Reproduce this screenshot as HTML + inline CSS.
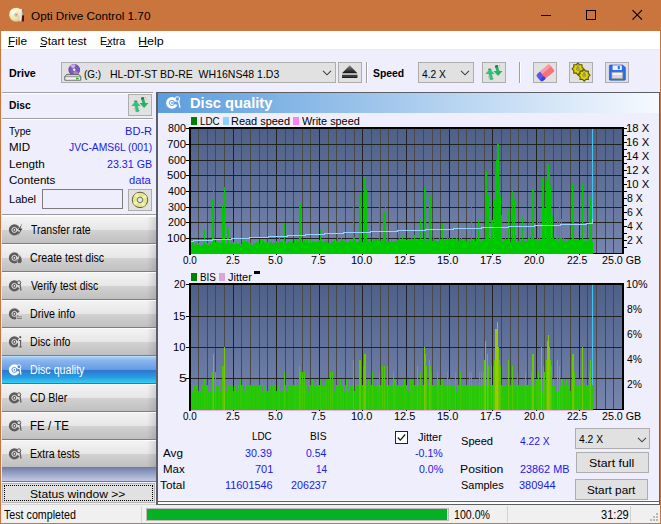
<!DOCTYPE html><html><head><meta charset="utf-8"><title>Opti Drive Control 1.70</title><style>
html,body{margin:0;padding:0;background:#eeeefc;overflow:hidden}
#w{position:relative;width:661px;height:524px;background:#eeeefc;overflow:hidden;font-family:"Liberation Sans", sans-serif}
#w div,#w span,#w svg{position:absolute}
#w span{white-space:pre;line-height:1;transform-origin:0 0;color:#000}
.btn{background:#e1e1e1;border:1px solid #adadad;box-sizing:border-box}
.nav{left:2px;width:154px;height:28px;box-sizing:border-box;border-top:1px solid #fafafa;border-bottom:1px solid #7d7d7d;background:linear-gradient(90deg,rgba(0,0,0,0) 0,rgba(0,0,0,0) 94%,rgba(0,0,0,.12) 100%),linear-gradient(180deg,#f3f3f3 0,#e7e7e7 48%,#d1d1d1 52%,#c0c0c0 100%)}
.navsel{border-top:1px solid #b8dcfa;border-bottom:1px solid #2a7bc0;background:linear-gradient(180deg,#a6cef4 0,#86b4ee 15%,#6a9ae4 48%,#2c78d0 52%,#2a9ce0 78%,#30d0f4 100%)}
</style></head><body><div id="w">
<div style="left:0px;top:0px;width:661px;height:31px;background:#ca753d"></div>
<div style="left:0px;top:31px;width:661px;height:18px;background:#fff"></div>
<div style="left:1px;top:49px;width:659px;height:1px;background:#ebebee"></div>
<div style="left:0px;top:0px;width:1px;height:524px;background:#ca753d"></div>
<div style="left:660px;top:0px;width:1px;height:524px;background:#ca753d"></div>
<div style="left:0px;top:523px;width:661px;height:1px;background:#ca753d"></div>
<svg style="left:8px;top:6px" width="18" height="18" viewBox="0 0 18 18"><defs><radialGradient id="cd" cx=".35" cy=".3" r=".8"><stop offset="0" stop-color="#fffbe0"/><stop offset=".6" stop-color="#efe6b0"/><stop offset="1" stop-color="#c8bc80"/></radialGradient></defs><circle cx="8.2" cy="8.7" r="7" fill="url(#cd)"/><path d="M8.2 8.7L1.6 6.2A7 7 0 0 1 4.5 2.8Z" fill="#fff" opacity=".6"/><path d="M8.2 8.7L14.8 11.2A7 7 0 0 1 11.9 14.6Z" fill="#d8cc90" opacity=".7"/><circle cx="8.2" cy="8.7" r="1.9" fill="#d8d8d8" stroke="#bdbdbd" stroke-width=".5"/><circle cx="8.2" cy="8.7" r=".8" fill="#c9723c"/><path d="M12.2 3.2V15.2" stroke="#e8e8e8" stroke-width="1.5"/><path d="M11 3.4L12.2 5L13.6 3.2" stroke="#f4f4f4" stroke-width="1.2" fill="none"/><path d="M15 3V9.5" stroke="#777" stroke-width=".9"/><rect x="14" y="9.3" width="2" height="6.2" rx=".6" fill="#5a0c0c"/></svg>
<svg style="left:530px;top:0" width="131" height="31" viewBox="0 0 131 31"><g stroke="#000" stroke-width="1" fill="none"><path d="M11 15.5H21"/><rect x="56.5" y="10.5" width="9" height="9"/><path d="M102.5 10.2L112 19.7M112 10.2L102.5 19.7" stroke-width="1.15"/></g></svg>
<div style="left:8px;top:46.3px;width:6px;height:1px;background:#000"></div>
<div style="left:40px;top:46.3px;width:6px;height:1px;background:#000"></div>
<div style="left:105.5px;top:46.3px;width:5.5px;height:1px;background:#000"></div>
<div style="left:139px;top:46.3px;width:8.5px;height:1px;background:#000"></div>
<div class="btn" style="left:61px;top:62px;width:275px;height:21px"></div>
<svg style="left:322px;top:70.3px" width="10" height="6" viewBox="0 0 10 6"><path d="M1 .8L5 4.8L9 .8" stroke="#404040" stroke-width="1.1" fill="none"/></svg>
<div class="btn" style="left:338px;top:62px;width:24px;height:21px"></div>
<svg style="left:341px;top:64px" width="18" height="16" viewBox="0 0 18 16"><defs><linearGradient id="ej" x1="0" y1="0" x2="0" y2="1"><stop offset="0" stop-color="#8a8a8a"/><stop offset="1" stop-color="#111"/></linearGradient></defs><path d="M8.7 1.2L16.4 9.2H1Z" fill="url(#ej)"/><rect x="1" y="10.8" width="15.4" height="3.2" fill="#1a1a1a"/><rect x="1" y="11.6" width="15.4" height=".9" fill="#666"/></svg>
<div style="left:366px;top:62px;width:1px;height:21px;background:#a0a0a0"></div>
<div style="left:367px;top:62px;width:1px;height:21px;background:#fff"></div>
<div class="btn" style="left:418px;top:62px;width:56px;height:21px"></div>
<svg style="left:460px;top:70.3px" width="10" height="6" viewBox="0 0 10 6"><path d="M1 .8L5 4.8L9 .8" stroke="#404040" stroke-width="1.1" fill="none"/></svg>
<div class="btn" style="left:482px;top:62px;width:24px;height:21px"></div>
<div class="btn" style="left:533px;top:62px;width:24px;height:21px"></div>
<div class="btn" style="left:569px;top:62px;width:24px;height:21px"></div>
<div class="btn" style="left:605px;top:62px;width:24px;height:21px"></div>
<div style="left:519px;top:62px;width:1px;height:21px;background:#a0a0a0"></div>
<div style="left:520px;top:62px;width:1px;height:21px;background:#fff"></div>
<svg style="left:482px;top:62px" width="24" height="22" viewBox="0 0 24 22"><defs><linearGradient id="ar482" x1="0" y1="0" x2="1" y2="1"><stop offset="0" stop-color="#28b868"/><stop offset="1" stop-color="#3cd884"/></linearGradient></defs><path d="M7.9 6.8L3.3 11.9H6.6L8.4 18.2L11.2 17.4L9.9 11.9H12.6Z" fill="#2fc474"/><path d="M12.8 3.9L15.6 3L17.4 9H20.5L16.1 13.9L11.5 9H14.4Z" fill="#27b267"/><path d="M13 3.8L15.4 3.1L16 5L13.6 5.8Z" fill="#157a40"/><path d="M6 7.2H9.4" stroke="#444" stroke-width=".8"/><path d="M17.2 3.2l.8 2.2M6.5 14.5l1 3M11.4 16.2l-.6.8" stroke="#666" stroke-width=".6" stroke-dasharray="1 1"/></svg>
<svg style="left:535px;top:63px" width="21" height="20" viewBox="0 0 21 20"><g transform="rotate(-40 10.5 10)"><rect x="1.6" y="5.4" width="7" height="9" rx="2.2" fill="#5458f0"/><rect x="7" y="5.4" width="12" height="9" rx="1.6" fill="#f4727c"/><rect x="7.4" y="5.4" width="11.2" height="3.2" rx="1.2" fill="#fb9aa0"/><rect x="2.4" y="11.4" width="5" height="3" rx="1.2" fill="#3a3ee0"/></g></svg>
<svg style="left:569px;top:62px" width="24" height="21" viewBox="0 0 24 21"><path d="M14.8 6.9L13.0 8.6L13.1 11.1L10.6 11.0L8.9 12.8L7.2 11.0L4.7 11.1L4.8 8.6L3.0 6.9L4.8 5.2L4.7 2.7L7.2 2.8L8.9 1.0L10.6 2.8L13.1 2.7L13.0 5.2Z" fill="#dcd400" stroke="#5e5800" stroke-width="1.1" stroke-linejoin="round"/><circle cx="8.9" cy="6.9" r="1.6" fill="#c8c4a0" stroke="#6e6800" stroke-width=".5"/><path d="M8.9 3.1V7.5" stroke="#8a8a8a" stroke-width="1.3"/><path d="M21.1 13.2L19.3 14.9L19.4 17.4L16.9 17.3L15.2 19.1L13.5 17.3L11.0 17.4L11.1 14.9L9.3 13.2L11.1 11.5L11.0 9.0L13.5 9.1L15.2 7.3L16.9 9.1L19.4 9.0L19.3 11.5Z" fill="#dcd400" stroke="#5e5800" stroke-width="1.1" stroke-linejoin="round"/><circle cx="15.2" cy="13.2" r="1.6" fill="#c8c4a0" stroke="#6e6800" stroke-width=".5"/><path d="M15.2 9.4V13.8" stroke="#8a8a8a" stroke-width="1.3"/></svg>
<svg style="left:608px;top:64px" width="19" height="18" viewBox="0 0 19 18"><path d="M2.2 1H14.6L17.4 3.4V15.4Q17.4 16.2 16.6 16.2H2.2Q1.4 16.2 1.4 15.4V1.8Q1.4 1 2.2 1Z" fill="#2a6cf0" stroke="#1c4ec8" stroke-width=".6"/><rect x="4.6" y="1.4" width="9.2" height="4.6" fill="#eef2ff"/><rect x="9.8" y="2" width="2" height="3.2" fill="#2a6cf0"/><rect x="3.8" y="8.2" width="11" height="6.6" fill="#d8d8d8" stroke="#8a8a8a" stroke-width=".8"/><rect x="4.4" y="8.8" width="9.8" height="2" fill="#f4f4f4"/></svg>
<svg style="left:64px;top:63px" width="18" height="19" viewBox="0 0 18 19"><circle cx="10.2" cy="6.8" r="5.4" fill="#8458c0" stroke="#4a2c80" stroke-width=".7"/><path d="M10.2 6.8L6.2 3A5.4 5.4 0 0 1 11.5 1.5Z" fill="#d8c0f4" opacity=".85"/><path d="M10.2 6.8L14.6 10A5.4 5.4 0 0 1 9 12.1Z" fill="#b898e4" opacity=".7"/><circle cx="10.2" cy="6.8" r="1.7" fill="#efe8fa" stroke="#4a2c80" stroke-width=".5"/><path d="M2.6 11.4H15L16.8 13.6V17.2H.8V13.6Z" fill="#d4d4d4" stroke="#4c4c4c" stroke-width=".8"/><path d="M.8 13.8H16.8" stroke="#6a6a6a" stroke-width=".7"/><rect x="1.6" y="14.4" width="14.4" height="2.2" fill="#f0f0f0"/><rect x="12" y="14.8" width="2.6" height="1.6" fill="#18b818"/></svg>
<div style="left:2px;top:92px;width:151px;height:1px;background:#a0a0a0"></div>
<div style="left:2px;top:93px;width:151px;height:1px;background:#fff"></div>
<div style="left:2px;top:118px;width:151px;height:1px;background:#a0a0a0"></div>
<div style="left:2px;top:119px;width:151px;height:1px;background:#fff"></div>
<div class="btn" style="left:128px;top:94px;width:24px;height:22px"></div>
<svg style="left:128px;top:94px" width="24" height="22" viewBox="0 0 24 22"><defs><linearGradient id="ar128" x1="0" y1="0" x2="1" y2="1"><stop offset="0" stop-color="#28b868"/><stop offset="1" stop-color="#3cd884"/></linearGradient></defs><path d="M7.9 6.8L3.3 11.9H6.6L8.4 18.2L11.2 17.4L9.9 11.9H12.6Z" fill="#2fc474"/><path d="M12.8 3.9L15.6 3L17.4 9H20.5L16.1 13.9L11.5 9H14.4Z" fill="#27b267"/><path d="M13 3.8L15.4 3.1L16 5L13.6 5.8Z" fill="#157a40"/><path d="M6 7.2H9.4" stroke="#444" stroke-width=".8"/><path d="M17.2 3.2l.8 2.2M6.5 14.5l1 3M11.4 16.2l-.6.8" stroke="#666" stroke-width=".6" stroke-dasharray="1 1"/></svg>
<div style="left:42px;top:189px;width:81px;height:20px;box-sizing:border-box;border:1px solid #7a7a7a;background:#eeeefc"></div>
<div class="btn" style="left:128px;top:189px;width:24px;height:22px"></div>
<svg style="left:131px;top:191px" width="18" height="18" viewBox="0 0 18 18"><circle cx="9" cy="8.9" r="7.7" fill="#e6e68c" stroke="#505020" stroke-width=".9"/><path d="M9 8.9L3.2 4.2A7.5 7.5 0 0 1 6.6 1.8ZM9 8.9L14.8 13.6A7.5 7.5 0 0 1 11.4 16ZM9 8.9L13.8 3.4A7.5 7.5 0 0 1 16 6.4ZM9 8.9L4.2 14.4A7.5 7.5 0 0 1 2 11.4Z" fill="#f6f6c0" opacity=".8"/><circle cx="9" cy="8.9" r="2.8" fill="#dfe6dc" stroke="#5c6c5c" stroke-width=".9"/></svg>
<div style="left:2px;top:214px;width:154px;height:1px;background:#9a9a9a"></div>
<div style="left:2px;top:215px;width:154px;height:1px;background:#fff"></div>
<div class="nav" style="top:216px"></div>
<svg style="left:7px;top:222px" width="17" height="16" viewBox="0 0 17 16"><circle cx="7.4" cy="7.9" r="5.6" fill="#5e5e5e"/><circle cx="7.4" cy="7.9" r="2.5" fill="none" stroke="#f4f4f4" stroke-width=".9"/><circle cx="7.4" cy="7.9" r=".8" fill="#f4f4f4"/><path d="M8.6 7.9L13.4 5.2V10.6Z" fill="#dcdcdc"/><path d="M15.2 1.2L11.2 8.2L13.4 8.0L10.6 14.2L15.4 6.6L13.2 6.8Z" fill="#333"/></svg>
<div class="nav" style="top:244px"></div>
<svg style="left:7px;top:250px" width="17" height="16" viewBox="0 0 17 16"><circle cx="7.4" cy="7.9" r="5.6" fill="#5e5e5e"/><circle cx="7.4" cy="7.9" r="2.5" fill="none" stroke="#f4f4f4" stroke-width=".9"/><circle cx="7.4" cy="7.9" r=".8" fill="#f4f4f4"/><path d="M8.6 7.9L13.4 5.2V10.6Z" fill="#dcdcdc"/><path d="M11.5 4.5C14 6 15.6 8.5 15 11.5C14.5 13.6 12 14.2 10.6 12.8C9.4 11.4 10.6 9.6 11.6 8.4C12 7 11.9 5.6 11.5 4.5Z" fill="#5e5e5e" stroke="#dcdcdc" stroke-width=".6"/></svg>
<div class="nav" style="top:272px"></div>
<svg style="left:7px;top:278px" width="17" height="16" viewBox="0 0 17 16"><circle cx="7.4" cy="7.9" r="5.6" fill="#5e5e5e"/><circle cx="7.4" cy="7.9" r="2.5" fill="none" stroke="#f4f4f4" stroke-width=".9"/><circle cx="7.4" cy="7.9" r=".8" fill="#f4f4f4"/><path d="M8.6 7.9L13.4 5.2V10.6Z" fill="#dcdcdc"/><circle cx="11.9" cy="4.7" r="1.9" fill="#dcdcdc" stroke="#5e5e5e" stroke-width="1"/><path d="M13.1 6.3L14 12.6" stroke="#5e5e5e" stroke-width="1.2"/></svg>
<div class="nav" style="top:300px"></div>
<svg style="left:7px;top:306px" width="17" height="16" viewBox="0 0 17 16"><circle cx="7.4" cy="7.9" r="5.6" fill="#5e5e5e"/><circle cx="7.4" cy="7.9" r="2.5" fill="none" stroke="#f4f4f4" stroke-width=".9"/><circle cx="7.4" cy="7.9" r=".8" fill="#f4f4f4"/><path d="M8.6 7.9L13.4 5.2V10.6Z" fill="#dcdcdc"/><rect x="9.3" y="9.6" width="6" height="4" fill="#dcdcdc"/><path d="M10 10.8H15M10 12.6H15" stroke="#5e5e5e" stroke-width=".8"/></svg>
<div class="nav" style="top:328px"></div>
<svg style="left:7px;top:334px" width="17" height="16" viewBox="0 0 17 16"><circle cx="7.4" cy="7.9" r="5.6" fill="#5e5e5e"/><circle cx="7.4" cy="7.9" r="2.5" fill="none" stroke="#f4f4f4" stroke-width=".9"/><circle cx="7.4" cy="7.9" r=".8" fill="#f4f4f4"/><path d="M8.6 7.9L13.4 5.2V10.6Z" fill="#dcdcdc"/><rect x="11" y="5.2" width="3.6" height="9" fill="#dcdcdc"/><circle cx="13.2" cy="3.2" r="1.1" fill="#5e5e5e"/><path d="M12 6.5H13.6V13H15M11.6 13H15" stroke="#5e5e5e" stroke-width="1.1" fill="none"/></svg>
<div class="nav navsel" style="top:356px"></div>
<svg style="left:7px;top:362px" width="17" height="16" viewBox="0 0 17 16"><circle cx="7.4" cy="7.9" r="5.6" fill="#fff"/><circle cx="7.4" cy="7.9" r="2.5" fill="none" stroke="#4a8ad8" stroke-width=".9"/><circle cx="7.4" cy="7.9" r=".8" fill="#4a8ad8"/><path d="M8.6 7.9L13.4 5.2V10.6Z" fill="#4a8ad8"/><circle cx="11.9" cy="4.7" r="1.9" fill="#4a8ad8" stroke="#fff" stroke-width="1"/><path d="M13.1 6.3L14 12.6" stroke="#fff" stroke-width="1.2"/></svg>
<div class="nav" style="top:384px"></div>
<svg style="left:7px;top:390px" width="17" height="16" viewBox="0 0 17 16"><circle cx="7.4" cy="7.9" r="5.6" fill="#5e5e5e"/><circle cx="7.4" cy="7.9" r="2.5" fill="none" stroke="#f4f4f4" stroke-width=".9"/><circle cx="7.4" cy="7.9" r=".8" fill="#f4f4f4"/><path d="M8.6 7.9L13.4 5.2V10.6Z" fill="#dcdcdc"/><circle cx="11.9" cy="4.7" r="1.9" fill="#dcdcdc" stroke="#5e5e5e" stroke-width="1"/><path d="M13.1 6.3L14 12.6" stroke="#5e5e5e" stroke-width="1.2"/></svg>
<div class="nav" style="top:412px"></div>
<svg style="left:7px;top:418px" width="17" height="16" viewBox="0 0 17 16"><circle cx="7.4" cy="7.9" r="5.6" fill="#5e5e5e"/><circle cx="7.4" cy="7.9" r="2.5" fill="none" stroke="#f4f4f4" stroke-width=".9"/><circle cx="7.4" cy="7.9" r=".8" fill="#f4f4f4"/><path d="M8.6 7.9L13.4 5.2V10.6Z" fill="#dcdcdc"/><circle cx="11.9" cy="4.7" r="1.9" fill="#dcdcdc" stroke="#5e5e5e" stroke-width="1"/><path d="M13.1 6.3L14 12.6" stroke="#5e5e5e" stroke-width="1.2"/></svg>
<div class="nav" style="top:440px"></div>
<svg style="left:7px;top:446px" width="17" height="16" viewBox="0 0 17 16"><circle cx="7.4" cy="7.9" r="5.6" fill="#5e5e5e"/><circle cx="7.4" cy="7.9" r="2.5" fill="none" stroke="#f4f4f4" stroke-width=".9"/><circle cx="7.4" cy="7.9" r=".8" fill="#f4f4f4"/><path d="M8.6 7.9L13.4 5.2V10.6Z" fill="#dcdcdc"/><circle cx="11.9" cy="4.7" r="1.9" fill="#dcdcdc" stroke="#5e5e5e" stroke-width="1"/><path d="M13.1 6.3L14 12.6" stroke="#5e5e5e" stroke-width="1.2"/></svg>
<div style="left:2px;top:468px;width:154px;height:13px;background:linear-gradient(180deg,#7483ae 0,#9ca6c8 50%,#c6cae4 100%)"></div>
<div style="left:2px;top:481px;width:154px;height:1px;background:#7a7a7a"></div>
<div style="left:2px;top:482px;width:154px;height:1px;background:#f4f4ff"></div>
<div class="btn" style="left:2px;top:483px;width:153px;height:20px;border-color:#b4b4b4"></div>
<div style="left:4px;top:485px;width:149px;height:16px;box-sizing:border-box;border:1px dotted #000"></div>
<div style="left:156px;top:92px;width:504px;height:1px;background:#5c6066"></div>
<div style="left:156px;top:92px;width:2px;height:413px;background:#5c6066"></div>
<div style="left:659px;top:92px;width:1px;height:413px;background:#5c6066"></div>
<div style="left:158px;top:500px;width:501px;height:1px;background:#f8f8ff"></div>
<div style="left:158px;top:501px;width:501px;height:1px;background:#5c6066"></div>
<div style="left:158px;top:502px;width:501px;height:2px;background:#fff"></div>
<div style="left:158px;top:93px;width:501px;height:19.5px;background:linear-gradient(90deg,#5c9ddc 0,#f6faff 100%)"></div>
<svg style="left:164.7px;top:95px" width="17" height="16" viewBox="0 0 17 16"><circle cx="7" cy="7.9" r="5.9" fill="#fff"/><path d="M7 7.9L13.5 5.4V10.4Z" fill="#65a2de"/><circle cx="7" cy="7.9" r="2.6" fill="none" stroke="#65a2de" stroke-width="1"/><circle cx="7" cy="7.9" r=".9" fill="#65a2de"/><circle cx="12.4" cy="4" r="2.3" fill="#65a2de" stroke="#fff" stroke-width="1"/><path d="M13.6 6L15 12.6" stroke="#fff" stroke-width="1.3"/></svg>
<svg style="left:0;top:0" width="661" height="524" viewBox="0 0 661 524" shape-rendering="crispEdges"><defs><linearGradient id="ga" x1="0" y1="0" x2="0" y2="1"><stop offset="0" stop-color="#4e6088"/><stop offset="1" stop-color="#7686af"/></linearGradient></defs><rect x="190" y="128" width="433" height="126" fill="url(#ga)"/><path d="M198.5 129V253M207.5 129V253M215.5 129V253M224.5 129V253M241.5 129V253M250.5 129V253M259.5 129V253M267.5 129V253M285.5 129V253M293.5 129V253M302.5 129V253M310.5 129V253M328.5 129V253M336.5 129V253M345.5 129V253M354.5 129V253M371.5 129V253M380.5 129V253M388.5 129V253M397.5 129V253M414.5 129V253M423.5 129V253M432.5 129V253M440.5 129V253M458.5 129V253M466.5 129V253M475.5 129V253M484.5 129V253M501.5 129V253M510.5 129V253M518.5 129V253M527.5 129V253M544.5 129V253M553.5 129V253M561.5 129V253M570.5 129V253M587.5 129V253M596.5 129V253M605.5 129V253M613.5 129V253" stroke="#494949" stroke-width="1" fill="none"/><path d="M233.5 129V253M276.5 129V253M319.5 129V253M362.5 129V253M406.5 129V253M449.5 129V253M492.5 129V253M536.5 129V253M579.5 129V253M191 238.5H622M191 222.5H622M191 207.5H622M191 191.5H622M191 175.5H622M191 160.5H622M191 144.5H622" stroke="#222222" stroke-width="1" fill="none"/><rect x="189" y="127" width="2" height="128" fill="#000"/><rect x="622" y="127" width="2" height="127" fill="#000"/><rect x="189" y="127" width="435" height="2" fill="#000"/><rect x="189" y="253" width="435" height="1" fill="#000"/><path d="M191 254v-9h1v9zM192 254v-13h1v13zM193 254v-12h1v12zM194 254v-8h1v8zM195 254v-11h1v11zM196 254v-11h1v11zM197 254v-9h1v9zM198 254v-11h1v11zM199 254v-9h1v9zM200 254v-8h1v8zM201 254v-9h1v9zM202 254v-9h1v9zM203 254v-11h1v11zM204 254v-24h1v24zM205 254v-10h1v10zM206 254v-10h1v10zM207 254v-11h1v11zM208 254v-9h1v9zM209 254v-10h1v10zM210 254v-11h1v11zM211 254v-9h1v9zM212 254v-54h1v54zM213 254v-72h1v72zM214 254v-14h1v14zM215 254v-11h1v11zM216 254v-13h1v13zM217 254v-11h1v11zM218 254v-12h1v12zM219 254v-11h1v11zM220 254v-11h1v11zM221 254v-11h1v11zM222 254v-48h1v48zM223 254v-46h1v46zM224 254v-67h1v67zM225 254v-11h1v11zM226 254v-10h1v10zM227 254v-30h1v30zM228 254v-26h1v26zM229 254v-11h1v11zM230 254v-10h1v10zM231 254v-14h1v14zM232 254v-11h1v11zM233 254v-12h1v12zM234 254v-10h1v10zM235 254v-10h1v10zM236 254v-12h1v12zM237 254v-10h1v10zM238 254v-10h1v10zM239 254v-11h1v11zM240 254v-9h1v9zM241 254v-10h1v10zM242 254v-12h1v12zM243 254v-11h1v11zM244 254v-15h1v15zM245 254v-12h1v12zM246 254v-12h1v12zM247 254v-13h1v13zM248 254v-11h1v11zM249 254v-10h1v10zM250 254v-11h1v11zM251 254v-10h1v10zM252 254v-9h1v9zM253 254v-11h1v11zM254 254v-10h1v10zM255 254v-11h1v11zM256 254v-12h1v12zM257 254v-11h1v11zM258 254v-12h1v12zM259 254v-10h1v10zM260 254v-14h1v14zM261 254v-11h1v11zM262 254v-14h1v14zM263 254v-13h1v13zM264 254v-12h1v12zM265 254v-11h1v11zM266 254v-12h1v12zM267 254v-12h1v12zM268 254v-10h1v10zM269 254v-13h1v13zM270 254v-12h1v12zM271 254v-12h1v12zM272 254v-11h1v11zM273 254v-12h1v12zM274 254v-11h1v11zM275 254v-13h1v13zM276 254v-13h1v13zM277 254v-13h1v13zM278 254v-11h1v11zM279 254v-27h1v27zM280 254v-12h1v12zM281 254v-13h1v13zM282 254v-12h1v12zM283 254v-10h1v10zM284 254v-30h1v30zM285 254v-13h1v13zM286 254v-11h1v11zM287 254v-11h1v11zM288 254v-13h1v13zM289 254v-11h1v11zM290 254v-13h1v13zM291 254v-11h1v11zM292 254v-13h1v13zM293 254v-11h1v11zM294 254v-14h1v14zM295 254v-11h1v11zM296 254v-15h1v15zM297 254v-12h1v12zM298 254v-13h1v13zM299 254v-51h1v51zM300 254v-51h1v51zM301 254v-11h1v11zM302 254v-12h1v12zM303 254v-12h1v12zM304 254v-14h1v14zM305 254v-12h1v12zM306 254v-14h1v14zM307 254v-14h1v14zM308 254v-12h1v12zM309 254v-11h1v11zM310 254v-15h1v15zM311 254v-11h1v11zM312 254v-13h1v13zM313 254v-12h1v12zM314 254v-13h1v13zM315 254v-11h1v11zM316 254v-12h1v12zM317 254v-13h1v13zM318 254v-13h1v13zM319 254v-14h1v14zM320 254v-25h1v25zM321 254v-13h1v13zM322 254v-12h1v12zM323 254v-12h1v12zM324 254v-13h1v13zM325 254v-14h1v14zM326 254v-13h1v13zM327 254v-14h1v14zM328 254v-11h1v11zM329 254v-11h1v11zM330 254v-11h1v11zM331 254v-14h1v14zM332 254v-12h1v12zM333 254v-13h1v13zM334 254v-14h1v14zM335 254v-12h1v12zM336 254v-13h1v13zM337 254v-35h1v35zM338 254v-12h1v12zM339 254v-13h1v13zM340 254v-12h1v12zM341 254v-16h1v16zM342 254v-15h1v15zM343 254v-13h1v13zM344 254v-12h1v12zM345 254v-14h1v14zM346 254v-12h1v12zM347 254v-12h1v12zM348 254v-12h1v12zM349 254v-13h1v13zM350 254v-14h1v14zM351 254v-12h1v12zM352 254v-13h1v13zM353 254v-54h1v54zM354 254v-17h1v17zM355 254v-14h1v14zM356 254v-12h1v12zM357 254v-12h1v12zM358 254v-13h1v13zM359 254v-61h1v61zM360 254v-61h1v61zM361 254v-14h1v14zM362 254v-12h1v12zM363 254v-12h1v12zM364 254v-77h1v77zM365 254v-77h1v77zM366 254v-64h1v64zM367 254v-15h1v15zM368 254v-12h1v12zM369 254v-14h1v14zM370 254v-14h1v14zM371 254v-12h1v12zM372 254v-13h1v13zM373 254v-15h1v15zM374 254v-14h1v14zM375 254v-15h1v15zM376 254v-15h1v15zM377 254v-14h1v14zM378 254v-15h1v15zM379 254v-60h1v60zM380 254v-13h1v13zM381 254v-12h1v12zM382 254v-15h1v15zM383 254v-42h1v42zM384 254v-42h1v42zM385 254v-56h1v56zM386 254v-13h1v13zM387 254v-16h1v16zM388 254v-13h1v13zM389 254v-13h1v13zM390 254v-12h1v12zM391 254v-14h1v14zM392 254v-13h1v13zM393 254v-12h1v12zM394 254v-13h1v13zM395 254v-14h1v14zM396 254v-13h1v13zM397 254v-14h1v14zM398 254v-15h1v15zM399 254v-27h1v27zM400 254v-14h1v14zM401 254v-13h1v13zM402 254v-18h1v18zM403 254v-15h1v15zM404 254v-15h1v15zM405 254v-13h1v13zM406 254v-14h1v14zM407 254v-15h1v15zM408 254v-14h1v14zM409 254v-15h1v15zM410 254v-15h1v15zM411 254v-17h1v17zM412 254v-14h1v14zM413 254v-15h1v15zM414 254v-19h1v19zM415 254v-15h1v15zM416 254v-14h1v14zM417 254v-13h1v13zM418 254v-15h1v15zM419 254v-15h1v15zM420 254v-34h1v34zM421 254v-14h1v14zM422 254v-14h1v14zM423 254v-15h1v15zM424 254v-66h1v66zM425 254v-66h1v66zM426 254v-13h1v13zM427 254v-14h1v14zM428 254v-15h1v15zM429 254v-58h1v58zM430 254v-58h1v58zM431 254v-18h1v18zM432 254v-13h1v13zM433 254v-18h1v18zM434 254v-15h1v15zM435 254v-14h1v14zM436 254v-13h1v13zM437 254v-13h1v13zM438 254v-13h1v13zM439 254v-16h1v16zM440 254v-15h1v15zM441 254v-15h1v15zM442 254v-31h1v31zM443 254v-15h1v15zM444 254v-14h1v14zM445 254v-13h1v13zM446 254v-14h1v14zM447 254v-19h1v19zM448 254v-15h1v15zM449 254v-16h1v16zM450 254v-15h1v15zM451 254v-14h1v14zM452 254v-16h1v16zM453 254v-14h1v14zM454 254v-15h1v15zM455 254v-15h1v15zM456 254v-16h1v16zM457 254v-13h1v13zM458 254v-13h1v13zM459 254v-16h1v16zM460 254v-15h1v15zM461 254v-16h1v16zM462 254v-14h1v14zM463 254v-13h1v13zM464 254v-14h1v14zM465 254v-15h1v15zM466 254v-13h1v13zM467 254v-13h1v13zM468 254v-14h1v14zM469 254v-15h1v15zM470 254v-13h1v13zM471 254v-53h1v53zM472 254v-14h1v14zM473 254v-13h1v13zM474 254v-15h1v15zM475 254v-13h1v13zM476 254v-16h1v16zM477 254v-13h1v13zM478 254v-35h1v35zM479 254v-13h1v13zM480 254v-13h1v13zM481 254v-15h1v15zM482 254v-14h1v14zM483 254v-14h1v14zM484 254v-15h1v15zM485 254v-82h1v82zM486 254v-82h1v82zM487 254v-59h1v59zM488 254v-59h1v59zM489 254v-14h1v14zM490 254v-16h1v16zM491 254v-49h1v49zM492 254v-34h1v34zM493 254v-14h1v14zM494 254v-54h1v54zM495 254v-79h1v79zM496 254v-94h1v94zM497 254v-110h1v110zM498 254v-110h1v110zM499 254v-69h1v69zM500 254v-59h1v59zM501 254v-39h1v39zM502 254v-13h1v13zM503 254v-13h1v13zM504 254v-15h1v15zM505 254v-24h1v24zM506 254v-15h1v15zM507 254v-15h1v15zM508 254v-44h1v44zM509 254v-13h1v13zM510 254v-12h1v12zM511 254v-14h1v14zM512 254v-63h1v63zM513 254v-14h1v14zM514 254v-54h1v54zM515 254v-19h1v19zM516 254v-12h1v12zM517 254v-15h1v15zM518 254v-13h1v13zM519 254v-16h1v16zM520 254v-13h1v13zM521 254v-14h1v14zM522 254v-36h1v36zM523 254v-15h1v15zM524 254v-13h1v13zM525 254v-13h1v13zM526 254v-13h1v13zM527 254v-15h1v15zM528 254v-16h1v16zM529 254v-36h1v36zM530 254v-14h1v14zM531 254v-28h1v28zM532 254v-65h1v65zM533 254v-65h1v65zM534 254v-15h1v15zM535 254v-15h1v15zM536 254v-15h1v15zM537 254v-47h1v47zM538 254v-13h1v13zM539 254v-42h1v42zM540 254v-14h1v14zM541 254v-14h1v14zM542 254v-76h1v76zM543 254v-76h1v76zM544 254v-46h1v46zM545 254v-13h1v13zM546 254v-74h1v74zM547 254v-90h1v90zM548 254v-90h1v90zM549 254v-81h1v81zM550 254v-69h1v69zM551 254v-15h1v15zM552 254v-39h1v39zM553 254v-16h1v16zM554 254v-15h1v15zM555 254v-14h1v14zM556 254v-16h1v16zM557 254v-39h1v39zM558 254v-13h1v13zM559 254v-50h1v50zM560 254v-16h1v16zM561 254v-35h1v35zM562 254v-14h1v14zM563 254v-16h1v16zM564 254v-13h1v13zM565 254v-14h1v14zM566 254v-13h1v13zM567 254v-15h1v15zM568 254v-15h1v15zM569 254v-14h1v14zM570 254v-14h1v14zM571 254v-13h1v13zM572 254v-70h1v70zM573 254v-58h1v58zM574 254v-14h1v14zM575 254v-15h1v15zM576 254v-15h1v15zM577 254v-14h1v14zM578 254v-14h1v14zM579 254v-14h1v14zM580 254v-15h1v15zM581 254v-15h1v15zM582 254v-71h1v71zM583 254v-13h1v13zM584 254v-14h1v14zM585 254v-13h1v13zM586 254v-13h1v13zM587 254v-15h1v15zM588 254v-14h1v14zM589 254v-39h1v39zM590 254v-56h1v56zM591 254v-56h1v56zM592 254v-13h1v13z" fill="#00c800"/><path d="M191 241.5H194M193.5 240V242M194 240.5H213M212.5 239V241M213 239.5H232M231.5 238V240M232 238.5H250M249.5 237V239M250 237.5H269M268.5 236V238M269 236.5H288M287.5 235V237M288 235.5H306M305.5 234V236M306 234.5H325M324.5 233V235M325 233.5H344M343.5 232V234M344 232.5H371M370.5 231V233M371 231.5H398M397.5 230V232M398 230.5H426M425.5 229V231M426 229.5H454M453.5 228V230M454 228.5H482M481.5 227V229M482 227.5H509M508.5 226V228M509 226.5H535M534.5 225V227M535 225.5H561M560.5 224V226M561 224.5H587M586.5 223V225M587 223.5H593" stroke="#96d4ff" stroke-width="1" fill="none"/><rect x="592" y="129" width="1" height="90" fill="#3cc8f2"/><rect x="592" y="219" width="1" height="5" fill="#96d4ff"/></svg>
<svg style="left:0;top:0" width="661" height="524" viewBox="0 0 661 524" shape-rendering="crispEdges"><defs><linearGradient id="gb" x1="0" y1="0" x2="0" y2="1"><stop offset="0" stop-color="#4e6088"/><stop offset="1" stop-color="#7686af"/></linearGradient></defs><rect x="190" y="284" width="433" height="126" fill="url(#gb)"/><path d="M198.5 285V409M207.5 285V409M215.5 285V409M224.5 285V409M241.5 285V409M250.5 285V409M259.5 285V409M267.5 285V409M285.5 285V409M293.5 285V409M302.5 285V409M310.5 285V409M328.5 285V409M336.5 285V409M345.5 285V409M354.5 285V409M371.5 285V409M380.5 285V409M388.5 285V409M397.5 285V409M414.5 285V409M423.5 285V409M432.5 285V409M440.5 285V409M458.5 285V409M466.5 285V409M475.5 285V409M484.5 285V409M501.5 285V409M510.5 285V409M518.5 285V409M527.5 285V409M544.5 285V409M553.5 285V409M561.5 285V409M570.5 285V409M587.5 285V409M596.5 285V409M605.5 285V409M613.5 285V409" stroke="#494949" stroke-width="1" fill="none"/><path d="M233.5 285V409M276.5 285V409M319.5 285V409M362.5 285V409M406.5 285V409M449.5 285V409M492.5 285V409M536.5 285V409M579.5 285V409M191 378.5H622M191 347.5H622M191 316.5H622" stroke="#222222" stroke-width="1" fill="none"/><rect x="189" y="283" width="2" height="128" fill="#000"/><rect x="622" y="283" width="2" height="127" fill="#000"/><rect x="189" y="283" width="435" height="2" fill="#000"/><rect x="189" y="409" width="435" height="1" fill="#000"/><path d="M191 410v-19h1v19zM192 410v-19h1v19zM195 410v-19h1v19zM198 410v-19h1v19zM200 410v-19h1v19zM203 410v-19h1v19zM208 410v-19h1v19zM210 410v-19h1v19zM214 410v-19h1v19zM217 410v-19h1v19zM220 410v-19h1v19zM221 410v-19h1v19zM225 410v-19h1v19zM226 410v-19h1v19zM229 410v-19h1v19zM231 410v-19h1v19zM233 410v-19h1v19zM236 410v-19h1v19zM239 410v-19h1v19zM244 410v-19h1v19zM251 410v-19h1v19zM255 410v-19h1v19zM262 410v-19h1v19zM266 410v-19h1v19zM267 410v-19h1v19zM268 410v-19h1v19zM269 410v-19h1v19zM271 410v-19h1v19zM276 410v-19h1v19zM280 410v-19h1v19zM281 410v-19h1v19zM282 410v-19h1v19zM286 410v-19h1v19zM287 410v-19h1v19zM291 410v-19h1v19zM308 410v-19h1v19zM311 410v-19h1v19zM327 410v-19h1v19zM329 410v-19h1v19zM334 410v-19h1v19zM344 410v-19h1v19zM348 410v-19h1v19zM354 410v-19h1v19zM408 410v-19h1v19zM435 410v-19h1v19zM456 410v-19h1v19zM507 410v-19h1v19zM542 410v-19h1v19zM556 410v-19h1v19zM558 410v-19h1v19zM570 410v-19h1v19z" fill="#1cc808"/><path d="M193 410v-25h1v25zM194 410v-25h1v25zM196 410v-25h1v25zM197 410v-25h1v25zM199 410v-25h1v25zM201 410v-25h1v25zM202 410v-25h1v25zM205 410v-25h1v25zM206 410v-25h1v25zM207 410v-25h1v25zM209 410v-25h1v25zM211 410v-25h1v25zM216 410v-25h1v25zM218 410v-25h1v25zM227 410v-25h1v25zM228 410v-25h1v25zM230 410v-25h1v25zM232 410v-25h1v25zM234 410v-25h1v25zM235 410v-25h1v25zM237 410v-25h1v25zM238 410v-25h1v25zM241 410v-25h1v25zM242 410v-25h1v25zM243 410v-25h1v25zM246 410v-25h1v25zM247 410v-25h1v25zM248 410v-25h1v25zM249 410v-25h1v25zM250 410v-25h1v25zM252 410v-25h1v25zM253 410v-25h1v25zM254 410v-25h1v25zM256 410v-25h1v25zM257 410v-25h1v25zM258 410v-25h1v25zM259 410v-25h1v25zM260 410v-25h1v25zM261 410v-25h1v25zM263 410v-25h1v25zM264 410v-25h1v25zM265 410v-25h1v25zM270 410v-25h1v25zM272 410v-25h1v25zM273 410v-25h1v25zM274 410v-25h1v25zM275 410v-25h1v25zM277 410v-25h1v25zM278 410v-25h1v25zM283 410v-25h1v25zM285 410v-25h1v25zM288 410v-25h1v25zM289 410v-25h1v25zM290 410v-25h1v25zM292 410v-25h1v25zM293 410v-25h1v25zM294 410v-25h1v25zM296 410v-25h1v25zM297 410v-25h1v25zM298 410v-25h1v25zM301 410v-25h1v25zM303 410v-25h1v25zM305 410v-25h1v25zM306 410v-25h1v25zM307 410v-25h1v25zM309 410v-25h1v25zM310 410v-25h1v25zM313 410v-25h1v25zM314 410v-25h1v25zM315 410v-25h1v25zM316 410v-25h1v25zM318 410v-25h1v25zM319 410v-25h1v25zM321 410v-25h1v25zM322 410v-25h1v25zM323 410v-25h1v25zM324 410v-25h1v25zM325 410v-25h1v25zM331 410v-25h1v25zM333 410v-25h1v25zM335 410v-25h1v25zM336 410v-25h1v25zM338 410v-25h1v25zM339 410v-25h1v25zM341 410v-25h1v25zM342 410v-25h1v25zM345 410v-25h1v25zM350 410v-25h1v25zM351 410v-25h1v25zM352 410v-25h1v25zM356 410v-25h1v25zM357 410v-25h1v25zM358 410v-25h1v25zM361 410v-25h1v25zM362 410v-25h1v25zM366 410v-25h1v25zM367 410v-25h1v25zM369 410v-25h1v25zM370 410v-25h1v25zM371 410v-25h1v25zM373 410v-25h1v25zM374 410v-25h1v25zM375 410v-25h1v25zM376 410v-25h1v25zM378 410v-25h1v25zM380 410v-25h1v25zM381 410v-25h1v25zM383 410v-25h1v25zM385 410v-25h1v25zM386 410v-25h1v25zM388 410v-25h1v25zM389 410v-25h1v25zM390 410v-25h1v25zM391 410v-25h1v25zM392 410v-25h1v25zM396 410v-25h1v25zM397 410v-25h1v25zM398 410v-25h1v25zM399 410v-25h1v25zM400 410v-25h1v25zM401 410v-25h1v25zM402 410v-25h1v25zM403 410v-25h1v25zM405 410v-25h1v25zM406 410v-25h1v25zM407 410v-25h1v25zM409 410v-25h1v25zM411 410v-25h1v25zM413 410v-25h1v25zM414 410v-25h1v25zM415 410v-25h1v25zM416 410v-25h1v25zM418 410v-25h1v25zM419 410v-25h1v25zM421 410v-25h1v25zM422 410v-25h1v25zM423 410v-25h1v25zM427 410v-25h1v25zM428 410v-25h1v25zM432 410v-25h1v25zM433 410v-25h1v25zM434 410v-25h1v25zM436 410v-25h1v25zM439 410v-25h1v25zM440 410v-25h1v25zM443 410v-25h1v25zM444 410v-25h1v25zM445 410v-25h1v25zM446 410v-25h1v25zM448 410v-25h1v25zM450 410v-25h1v25zM451 410v-25h1v25zM452 410v-25h1v25zM453 410v-25h1v25zM454 410v-25h1v25zM457 410v-25h1v25zM458 410v-25h1v25zM459 410v-25h1v25zM461 410v-25h1v25zM462 410v-25h1v25zM463 410v-25h1v25zM464 410v-25h1v25zM465 410v-25h1v25zM466 410v-25h1v25zM467 410v-25h1v25zM468 410v-25h1v25zM470 410v-25h1v25zM472 410v-25h1v25zM473 410v-25h1v25zM474 410v-25h1v25zM476 410v-25h1v25zM477 410v-25h1v25zM478 410v-25h1v25zM480 410v-25h1v25zM482 410v-25h1v25zM486 410v-25h1v25zM489 410v-25h1v25zM490 410v-25h1v25zM492 410v-25h1v25zM501 410v-25h1v25zM502 410v-25h1v25zM503 410v-25h1v25zM504 410v-25h1v25zM505 410v-25h1v25zM506 410v-25h1v25zM509 410v-25h1v25zM510 410v-25h1v25zM511 410v-25h1v25zM513 410v-25h1v25zM514 410v-25h1v25zM515 410v-25h1v25zM516 410v-25h1v25zM518 410v-25h1v25zM519 410v-25h1v25zM520 410v-25h1v25zM521 410v-25h1v25zM522 410v-25h1v25zM523 410v-25h1v25zM524 410v-25h1v25zM526 410v-25h1v25zM527 410v-25h1v25zM528 410v-25h1v25zM529 410v-25h1v25zM530 410v-25h1v25zM534 410v-25h1v25zM535 410v-25h1v25zM545 410v-25h1v25zM552 410v-25h1v25zM554 410v-25h1v25zM555 410v-25h1v25zM560 410v-25h1v25zM563 410v-25h1v25zM564 410v-25h1v25zM565 410v-25h1v25zM567 410v-25h1v25zM568 410v-25h1v25zM571 410v-25h1v25zM575 410v-25h1v25zM576 410v-25h1v25zM578 410v-25h1v25zM580 410v-25h1v25zM581 410v-25h1v25zM583 410v-25h1v25zM584 410v-25h1v25zM585 410v-25h1v25zM586 410v-25h1v25zM587 410v-25h1v25zM588 410v-25h1v25zM591 410v-25h1v25zM592 410v-25h1v25z" fill="#28c808"/><path d="M204 410v-31h1v31zM219 410v-31h1v31zM240 410v-31h1v31zM245 410v-31h1v31zM279 410v-31h1v31zM295 410v-31h1v31zM312 410v-31h1v31zM317 410v-31h1v31zM320 410v-31h1v31zM326 410v-31h1v31zM328 410v-31h1v31zM337 410v-31h1v31zM340 410v-31h1v31zM343 410v-31h1v31zM346 410v-31h1v31zM347 410v-31h1v31zM349 410v-31h1v31zM355 410v-31h1v31zM368 410v-31h1v31zM377 410v-31h1v31zM394 410v-31h1v31zM395 410v-31h1v31zM404 410v-31h1v31zM410 410v-31h1v31zM412 410v-31h1v31zM438 410v-31h1v31zM441 410v-31h1v31zM442 410v-31h1v31zM449 410v-31h1v31zM475 410v-31h1v31zM536 410v-31h1v31zM537 410v-31h1v31zM539 410v-31h1v31zM540 410v-31h1v31zM553 410v-31h1v31zM561 410v-31h1v31zM562 410v-31h1v31zM566 410v-31h1v31zM569 410v-31h1v31zM577 410v-31h1v31zM579 410v-31h1v31z" fill="#35c808"/><path d="M212 410v-38h1v38zM215 410v-38h1v38zM284 410v-38h1v38zM300 410v-38h1v38zM302 410v-38h1v38zM304 410v-38h1v38zM330 410v-38h1v38zM332 410v-38h1v38zM372 410v-38h1v38zM379 410v-38h1v38zM393 410v-38h1v38zM420 410v-38h1v38zM431 410v-38h1v38zM437 410v-38h1v38zM447 410v-38h1v38zM455 410v-38h1v38zM460 410v-38h1v38zM469 410v-38h1v38zM471 410v-38h1v38zM479 410v-38h1v38zM481 410v-38h1v38zM483 410v-38h1v38zM517 410v-38h1v38zM525 410v-38h1v38zM531 410v-38h1v38zM538 410v-38h1v38zM544 410v-38h1v38zM574 410v-38h1v38zM589 410v-38h1v38z" fill="#43c800"/><path d="M213 410v-56h1v56zM364 410v-56h1v56zM365 410v-56h1v56zM425 410v-56h1v56zM487 410v-56h1v56zM532 410v-56h1v56zM533 410v-56h1v56zM572 410v-56h1v56zM573 410v-56h1v56z" fill="#69c800"/><path d="M222 410v-44h1v44zM223 410v-44h1v44zM299 410v-44h1v44zM363 410v-44h1v44zM382 410v-44h1v44zM384 410v-44h1v44zM387 410v-44h1v44zM417 410v-44h1v44zM426 410v-44h1v44zM430 410v-44h1v44zM488 410v-44h1v44zM491 410v-44h1v44zM493 410v-44h1v44zM500 410v-44h1v44zM512 410v-44h1v44zM543 410v-44h1v44zM551 410v-44h1v44zM559 410v-44h1v44z" fill="#50c800"/><path d="M224 410v-63h1v63zM424 410v-63h1v63zM498 410v-63h1v63zM541 410v-63h1v63zM549 410v-63h1v63zM582 410v-63h1v63z" fill="#77c800"/><path d="M353 410v-50h1v50zM359 410v-50h1v50zM360 410v-50h1v50zM429 410v-50h1v50zM484 410v-50h1v50zM494 410v-50h1v50zM499 410v-50h1v50zM508 410v-50h1v50zM546 410v-50h1v50zM550 410v-50h1v50zM557 410v-50h1v50zM590 410v-50h1v50z" fill="#5cc800"/><path d="M485 410v-69h1v69zM547 410v-69h1v69z" fill="#84c800"/><path d="M495 410v-81h1v81zM496 410v-81h1v81z" fill="#9dc800"/><path d="M497 410v-88h1v88z" fill="#a5c800"/><path d="M548 410v-75h1v75z" fill="#90c800"/><rect x="592" y="285" width="1" height="100" fill="#3cc8f2"/><rect x="191" y="410" width="402" height="1" fill="#e6b4e6"/></svg>
<svg style="left:0;top:0" width="661" height="524" shape-rendering="crispEdges"><path d="M186 238.5H189M186 222.5H189M186 207.5H189M186 191.5H189M186 175.5H189M186 160.5H189M186 144.5H189M186 128.5H189M186 378.5H189M186 347.5H189M186 316.5H189M186 284.5H189M624 247.5H627M624 240.5H627M624 233.5H627M624 226.5H627M624 219.5H627M624 212.5H627M624 205.5H627M624 198.5H627M624 191.5H627M624 184.5H627M624 177.5H627M624 170.5H627M624 163.5H627M624 156.5H627M624 149.5H627M624 142.5H627M624 135.5H627M624 128.5H627M233.5 254V255M276.5 254V255M319.5 254V255M362.5 254V255M406.5 254V255M449.5 254V255M492.5 254V255M536.5 254V255M579.5 254V255M233.5 410V411M276.5 410V411M319.5 410V411M362.5 410V411M406.5 410V411M449.5 410V411M492.5 410V411M536.5 410V411M579.5 410V411" stroke="#000" stroke-width="1" fill="none"/></svg>
<div style="left:191px;top:117px;width:6px;height:8px;background:#008000"></div>
<div style="left:223px;top:117px;width:6px;height:8px;background:#8cd2ff"></div>
<div style="left:293px;top:117px;width:6px;height:8px;background:#ff80f0"></div>
<div style="left:191px;top:273px;width:6px;height:8px;background:#008000"></div>
<div style="left:219px;top:273px;width:6px;height:8px;background:#d8a8d8"></div>
<div style="left:254px;top:271.3px;width:6px;height:2.3px;background:#000"></div>
<div style="left:395px;top:431px;width:13px;height:13px;box-sizing:border-box;border:1px solid #222;background:#fff"></div>
<svg style="left:395px;top:431px" width="13" height="13" viewBox="0 0 13 13"><path d="M2.8 6.5L5.3 9.2L10.2 3.5" stroke="#111" stroke-width="1.2" fill="none"/></svg>
<div class="btn" style="left:575px;top:428px;width:75px;height:21px"></div>
<svg style="left:636.5px;top:436.5px" width="10" height="6" viewBox="0 0 10 6"><path d="M1 .8L5 4.8L9 .8" stroke="#404040" stroke-width="1.1" fill="none"/></svg>
<div class="btn" style="left:576px;top:452px;width:73px;height:21px"></div>
<div class="btn" style="left:575px;top:479px;width:73px;height:21px"></div>
<div style="left:1px;top:505px;width:659px;height:18px;background:#f0f0f0"></div>
<div style="left:1px;top:504px;width:155px;height:1px;background:#d4d4d4"></div>
<div style="left:156px;top:504px;width:504px;height:1px;background:#5c6066"></div>
<div style="left:141px;top:506px;width:1px;height:16px;background:#d2d2d2"></div>
<div style="left:507px;top:506px;width:1px;height:16px;background:#d2d2d2"></div>
<div style="left:630px;top:506px;width:1px;height:16px;background:#d2d2d2"></div>
<div style="left:146px;top:508px;width:303px;height:13px;box-sizing:border-box;border:1px solid #bcbcbc;background:#e6e6e6"></div>
<div style="left:147px;top:509px;width:300px;height:11px;background:#06b025"></div>
<svg style="left:0;top:0" width="661" height="524" shape-rendering="crispEdges"><rect x="656" y="519" width="2" height="2" fill="#b8b8b8"/><rect x="656" y="516" width="2" height="2" fill="#b8b8b8"/><rect x="656" y="513" width="2" height="2" fill="#b8b8b8"/><rect x="653" y="519" width="2" height="2" fill="#b8b8b8"/><rect x="653" y="516" width="2" height="2" fill="#b8b8b8"/><rect x="650" y="519" width="2" height="2" fill="#b8b8b8"/></svg>
<span style="left:31.0px;top:11px;font-size:11.5px;transform:scaleX(1.021);">Opti Drive Control 1.70</span>
<span style="left:7.5px;top:36px;font-size:11.5px;transform:scaleX(1.029);">File</span>
<span style="left:39.5px;top:36px;font-size:11.5px;transform:scaleX(1.011);">Start test</span>
<span style="left:99.6px;top:36px;font-size:11.5px;transform:scaleX(0.942);">Extra</span>
<span style="left:138.4px;top:36px;font-size:11.5px;transform:scaleX(1.091);">Help</span>
<span style="left:9.0px;top:68px;font-size:11.2px;font-weight:bold;transform:scaleX(0.959);">Drive</span>
<span style="left:84.1px;top:69px;font-size:11.2px;transform:scaleX(0.883);">(G:)</span>
<span style="left:109.8px;top:69px;font-size:11.2px;transform:scaleX(0.940);">HL-DT-ST BD-RE  WH16NS48 1.D3</span>
<span style="left:373.4px;top:68px;font-size:11.2px;font-weight:bold;transform:scaleX(0.930);">Speed</span>
<span style="left:422.3px;top:69px;font-size:11.2px;transform:scaleX(0.915);">4.2 X</span>
<span style="left:9.1px;top:100px;font-size:11.2px;font-weight:bold;transform:scaleX(0.918);">Disc</span>
<span style="left:9.3px;top:126px;font-size:11.2px;transform:scaleX(0.904);">Type</span>
<span style="left:124.7px;top:126px;font-size:11.2px;color:#1a1ae6;transform:scaleX(0.992);">BD-R</span>
<span style="left:8.9px;top:142px;font-size:11.2px;transform:scaleX(1.032);">MID</span>
<span style="left:69.2px;top:142px;font-size:11.2px;color:#1a1ae6;transform:scaleX(0.920);">JVC-AMS6L (001)</span>
<span style="left:8.9px;top:159px;font-size:11.2px;transform:scaleX(1.048);">Length</span>
<span style="left:106.7px;top:159px;font-size:11.2px;color:#1a1ae6;transform:scaleX(0.953);">23.31 GB</span>
<span style="left:8.9px;top:175px;font-size:11.2px;transform:scaleX(1.036);">Contents</span>
<span style="left:129.0px;top:175px;font-size:11.2px;color:#1a1ae6;transform:scaleX(1.000);">data</span>
<span style="left:8.9px;top:194px;font-size:11.2px;transform:scaleX(0.985);">Label</span>
<span style="left:31.1px;top:224px;font-size:12px;transform:scaleX(0.874);">Transfer rate</span>
<span style="left:29.7px;top:252px;font-size:12px;transform:scaleX(0.890);">Create test disc</span>
<span style="left:31.3px;top:280px;font-size:12px;transform:scaleX(0.868);">Verify test disc</span>
<span style="left:30.4px;top:308px;font-size:12px;transform:scaleX(0.890);">Drive info</span>
<span style="left:30.4px;top:336px;font-size:12px;transform:scaleX(0.880);">Disc info</span>
<span style="left:30.4px;top:364px;font-size:12px;color:#fff;transform:scaleX(0.887);">Disc quality</span>
<span style="left:29.7px;top:392px;font-size:12px;transform:scaleX(0.885);">CD Bler</span>
<span style="left:30.1px;top:420px;font-size:12px;transform:scaleX(0.962);">FE / TE</span>
<span style="left:30.2px;top:448px;font-size:12px;transform:scaleX(0.880);">Extra tests</span>
<span style="left:29.8px;top:489px;font-size:11.2px;transform:scaleX(1.080);">Status window &gt;&gt;</span>
<span style="left:3.8px;top:509px;font-size:12px;transform:scaleX(0.890);">Test completed</span>
<span style="left:453.6px;top:509px;font-size:12px;transform:scaleX(0.885);">100.0%</span>
<span style="left:601.1px;top:509px;font-size:12px;transform:scaleX(0.924);">31:29</span>
<span style="left:190.0px;top:96px;font-size:14.5px;font-weight:bold;color:#fff;transform:scaleX(1.012);">Disc quality</span>
<span style="left:199.7px;top:117px;font-size:10px;transform:scaleX(0.979);">LDC</span>
<span style="left:231.3px;top:117px;font-size:10px;transform:scaleX(1.094);">Read speed</span>
<span style="left:302.0px;top:117px;font-size:10px;transform:scaleX(1.085);">Write speed</span>
<span style="left:199.7px;top:273px;font-size:10px;transform:scaleX(0.987);">BIS</span>
<span style="left:228.0px;top:273px;font-size:10px;transform:scaleX(1.105);">Jitter</span>
<span style="left:252.1px;top:431px;font-size:11.2px;transform:scaleX(0.881);">LDC</span>
<span style="left:309.6px;top:431px;font-size:11.2px;transform:scaleX(0.912);">BIS</span>
<span style="left:162.8px;top:448px;font-size:11.2px;transform:scaleX(1.044);">Avg</span>
<span style="left:162.5px;top:464px;font-size:11.2px;transform:scaleX(1.025);">Max</span>
<span style="left:160.2px;top:480px;font-size:11.2px;transform:scaleX(1.061);">Total</span>
<span style="left:245.4px;top:448px;font-size:11.2px;color:#1a1ae6;transform:scaleX(0.959);">30.39</span>
<span style="left:254.8px;top:464px;font-size:11.2px;color:#1a1ae6;transform:scaleX(0.982);">701</span>
<span style="left:224.5px;top:480px;font-size:11.2px;color:#1a1ae6;transform:scaleX(0.973);">11601546</span>
<span style="left:306.2px;top:448px;font-size:11.2px;color:#1a1ae6;transform:scaleX(0.932);">0.54</span>
<span style="left:316.1px;top:464px;font-size:11.2px;color:#1a1ae6;transform:scaleX(0.882);">14</span>
<span style="left:291.2px;top:480px;font-size:11.2px;color:#1a1ae6;transform:scaleX(0.959);">206237</span>
<span style="left:417.8px;top:432px;font-size:11.2px;transform:scaleX(0.987);">Jitter</span>
<span style="left:414.6px;top:448px;font-size:11.2px;color:#1a1ae6;transform:scaleX(0.952);">-0.1%</span>
<span style="left:418.6px;top:464px;font-size:11.2px;color:#1a1ae6;transform:scaleX(0.944);">0.0%</span>
<span style="left:460.7px;top:436px;font-size:11.2px;transform:scaleX(0.990);">Speed</span>
<span style="left:460.1px;top:464px;font-size:11.2px;transform:scaleX(1.089);">Position</span>
<span style="left:460.5px;top:480px;font-size:11.2px;transform:scaleX(0.979);">Samples</span>
<span style="left:520.4px;top:436px;font-size:11.2px;color:#1a1ae6;transform:scaleX(0.919);">4.22 X</span>
<span style="left:520.4px;top:464px;font-size:11.2px;color:#1a1ae6;transform:scaleX(0.969);">23862 MB</span>
<span style="left:519.4px;top:480px;font-size:11.2px;color:#1a1ae6;transform:scaleX(0.983);">380944</span>
<span style="left:578.9px;top:434px;font-size:11.2px;transform:scaleX(0.919);">4.2 X</span>
<span style="left:589.2px;top:458px;font-size:11.2px;transform:scaleX(1.105);">Start full</span>
<span style="left:586.5px;top:485px;font-size:11.2px;transform:scaleX(1.051);">Start part</span>
<span style="left:167.1px;top:234px;font-size:10px;transform:scaleX(1.140);">100</span>
<span style="left:168.2px;top:218px;font-size:10px;transform:scaleX(1.069);">200</span>
<span style="left:168.2px;top:203px;font-size:10px;transform:scaleX(1.069);">300</span>
<span style="left:168.2px;top:187px;font-size:10px;transform:scaleX(1.069);">400</span>
<span style="left:167.1px;top:171px;font-size:10px;transform:scaleX(1.140);">500</span>
<span style="left:168.2px;top:156px;font-size:10px;transform:scaleX(1.069);">600</span>
<span style="left:167.1px;top:140px;font-size:10px;transform:scaleX(1.140);">700</span>
<span style="left:168.2px;top:124px;font-size:10px;transform:scaleX(1.069);">800</span>
<span style="left:178.5px;top:374px;font-size:10px;transform:scaleX(1.400);">5</span>
<span style="left:173.2px;top:343px;font-size:10px;transform:scaleX(1.120);">10</span>
<span style="left:173.2px;top:312px;font-size:10px;transform:scaleX(1.120);">15</span>
<span style="left:174.3px;top:280px;font-size:10px;transform:scaleX(1.018);">20</span>
<span style="left:626.8px;top:236px;font-size:10px;transform:scaleX(1.047);">2 X</span>
<span style="left:626.8px;top:222px;font-size:10px;transform:scaleX(1.047);">4 X</span>
<span style="left:626.8px;top:208px;font-size:10px;transform:scaleX(1.047);">6 X</span>
<span style="left:626.8px;top:194px;font-size:10px;transform:scaleX(1.047);">8 X</span>
<span style="left:625.7px;top:180px;font-size:10px;transform:scaleX(1.126);">10 X</span>
<span style="left:625.7px;top:166px;font-size:10px;transform:scaleX(1.126);">12 X</span>
<span style="left:625.7px;top:152px;font-size:10px;transform:scaleX(1.126);">14 X</span>
<span style="left:625.7px;top:138px;font-size:10px;transform:scaleX(1.126);">16 X</span>
<span style="left:625.7px;top:124px;font-size:10px;transform:scaleX(1.126);">18 X</span>
<span style="left:626.6px;top:380px;font-size:10px;transform:scaleX(1.029);">2%</span>
<span style="left:626.6px;top:355px;font-size:10px;transform:scaleX(1.029);">4%</span>
<span style="left:626.6px;top:330px;font-size:10px;transform:scaleX(1.029);">6%</span>
<span style="left:626.6px;top:305px;font-size:10px;transform:scaleX(1.029);">8%</span>
<span style="left:625.5px;top:280px;font-size:10px;transform:scaleX(1.074);">10%</span>
<span style="left:182.7px;top:256px;font-size:10px;transform:scaleX(0.986);">0.0</span>
<span style="left:225.8px;top:256px;font-size:10px;transform:scaleX(0.986);">2.5</span>
<span style="left:267.8px;top:256px;font-size:10px;transform:scaleX(1.062);">5.0</span>
<span style="left:310.9px;top:256px;font-size:10px;transform:scaleX(1.062);">7.5</span>
<span style="left:350.9px;top:256px;font-size:10px;transform:scaleX(1.100);">10.0</span>
<span style="left:394.0px;top:256px;font-size:10px;transform:scaleX(1.100);">12.5</span>
<span style="left:437.1px;top:256px;font-size:10px;transform:scaleX(1.100);">15.0</span>
<span style="left:480.2px;top:256px;font-size:10px;transform:scaleX(1.100);">17.5</span>
<span style="left:524.3px;top:256px;font-size:10px;transform:scaleX(1.042);">20.0</span>
<span style="left:567.4px;top:256px;font-size:10px;transform:scaleX(1.042);">22.5</span>
<span style="left:602.3px;top:256px;font-size:10px;transform:scaleX(1.069);">25.0 GB</span>
<span style="left:182.7px;top:412px;font-size:10px;transform:scaleX(0.986);">0.0</span>
<span style="left:225.8px;top:412px;font-size:10px;transform:scaleX(0.986);">2.5</span>
<span style="left:267.8px;top:412px;font-size:10px;transform:scaleX(1.062);">5.0</span>
<span style="left:310.9px;top:412px;font-size:10px;transform:scaleX(1.062);">7.5</span>
<span style="left:350.9px;top:412px;font-size:10px;transform:scaleX(1.100);">10.0</span>
<span style="left:394.0px;top:412px;font-size:10px;transform:scaleX(1.100);">12.5</span>
<span style="left:437.1px;top:412px;font-size:10px;transform:scaleX(1.100);">15.0</span>
<span style="left:480.2px;top:412px;font-size:10px;transform:scaleX(1.100);">17.5</span>
<span style="left:524.3px;top:412px;font-size:10px;transform:scaleX(1.042);">20.0</span>
<span style="left:567.4px;top:412px;font-size:10px;transform:scaleX(1.042);">22.5</span>
<span style="left:602.3px;top:412px;font-size:10px;transform:scaleX(1.069);">25.0 GB</span>
</div></body></html>
